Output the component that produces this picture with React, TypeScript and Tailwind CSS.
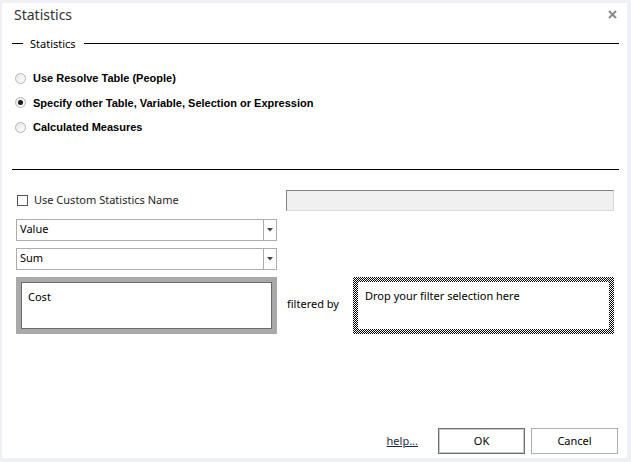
import React from "react";

const ui = { fontFamily: '"Segoe UI", "Noto Sans", "Open Sans", sans-serif' };
const bold = { fontFamily: '"Liberation Sans", Arial, sans-serif' };

function Radio({ checked, label }: { checked?: boolean; label: string }) {
  return (
    <div className="flex h-[24.5px] items-center">
      <span className="ml-[13px] flex h-[11px] w-[11px] items-center justify-center rounded-full border border-[#b5b5b5] bg-gradient-to-br from-[#e6e6e6] to-white">
        {checked && <span className="h-[5px] w-[5px] rounded-full bg-[#1a1a1a]" />}
      </span>
      <span className="ml-[7px] text-[11px] font-bold text-black" style={bold}>
        {label}
      </span>
    </div>
  );
}

function Select({ value }: { value: string }) {
  return (
    <div className="flex h-[22px] w-[261px] items-stretch border border-[#acacac] bg-white">
      <span className="flex flex-1 items-center pl-[3px] text-[11px] text-black">{value}</span>
      <span className="flex w-[13px] items-center justify-center border-l border-[#acacac]">
        <svg width="6" height="4" viewBox="0 0 6 4">
          <path d="M0 0h6L3 3.5z" fill="#444" />
        </svg>
      </span>
    </div>
  );
}

export default function App() {
  return (
    <div className="h-[462px] w-[631px] bg-[#eef0f5] pb-[4px] pl-[2px] pr-[4px] pt-[3px]" style={ui}>
      <div className="flex h-full flex-col bg-white text-[#1e1e1e]">
        {/* title bar */}
        <div className="flex h-[22px] items-center justify-between pl-[12px] pr-[10px]">
          <span className="text-[14px] text-[#333]">Statistics</span>
          <svg width="9" height="9" viewBox="0 0 9 9">
            <path d="M1 1l7 7M8 1l-7 7" stroke="#8a8a8a" strokeWidth="2" />
          </svg>
        </div>

        {/* group header */}
        <div className="mt-[11px] flex h-[14px] items-center pl-[10px] pr-[8px]">
          <span className="h-px w-[11px] bg-black" />
          <span className="ml-[7px] text-[11px] leading-none text-black">Statistics</span>
          <span className="ml-[8px] h-px flex-1 bg-black" />
        </div>

        {/* source options */}
        <div className="mt-[16px] flex flex-col">
          <Radio label="Use Resolve Table (People)" />
          <Radio checked label="Specify other Table, Variable, Selection or Expression" />
          <Radio label="Calculated Measures" />
        </div>

        <div className="ml-[10px] mr-[8px] mt-[29px] h-px bg-black" />

        {/* statistic settings */}
        <div className="mt-[20px] flex h-[21px] items-center">
          <span className="ml-[15px] h-[11px] w-[11px] border border-[#555] bg-white" />
          <span className="ml-[6px] text-[11px] text-[#1e1e1e]">Use Custom Statistics Name</span>
          <span className="ml-auto mr-[13px] h-[21px] w-[328px] border border-b-[#dadada] border-l-[#808080] border-r-[#dadada] border-t-[#808080] bg-[#f0f0f0]" />
        </div>

        <div className="ml-[14px] mt-[8px] flex flex-col gap-[7px]">
          <Select value="Value" />
          <Select value="Sum" />
        </div>

        <div className="ml-[14px] mt-[7px] flex items-start">
          <div className="h-[57px] w-[261px] border-[5px] border-[#a9a9a9]">
            <div className="h-full border border-[#6a6a6a] bg-white pl-[6px] pt-[7px] text-[11px] leading-[14px] text-black">
              Cost
            </div>
          </div>
          <span className="ml-[10px] mt-[19px] text-[11px] text-black">filtered by</span>
          <div className="ml-auto mr-[13px] h-[57px] w-[261px] bg-[conic-gradient(#000_25%,#fff_0_50%,#000_0_75%,#fff_0)] bg-[length:2px_2px] p-[5px]">
            <div className="h-full bg-white pl-[7px] pt-[7px] text-[11px] leading-[14px] text-black">
              Drop your filter selection here
            </div>
          </div>
        </div>

        {/* footer */}
        <div className="mb-[4px] mt-auto flex items-center justify-end pr-[9px]">
          <span className="mr-[20px] text-[11px] text-[#1e2a44] underline">help...</span>
          <button className="h-[26px] w-[87px] border border-[#6e6e6e] bg-white text-[11px] text-black outline outline-1 -outline-offset-2 outline-[#c8c8c8]">
            OK
          </button>
          <button className="ml-[6px] h-[26px] w-[87px] border border-[#adadad] bg-white text-[11px] text-black">
            Cancel
          </button>
        </div>
      </div>
    </div>
  );
}
